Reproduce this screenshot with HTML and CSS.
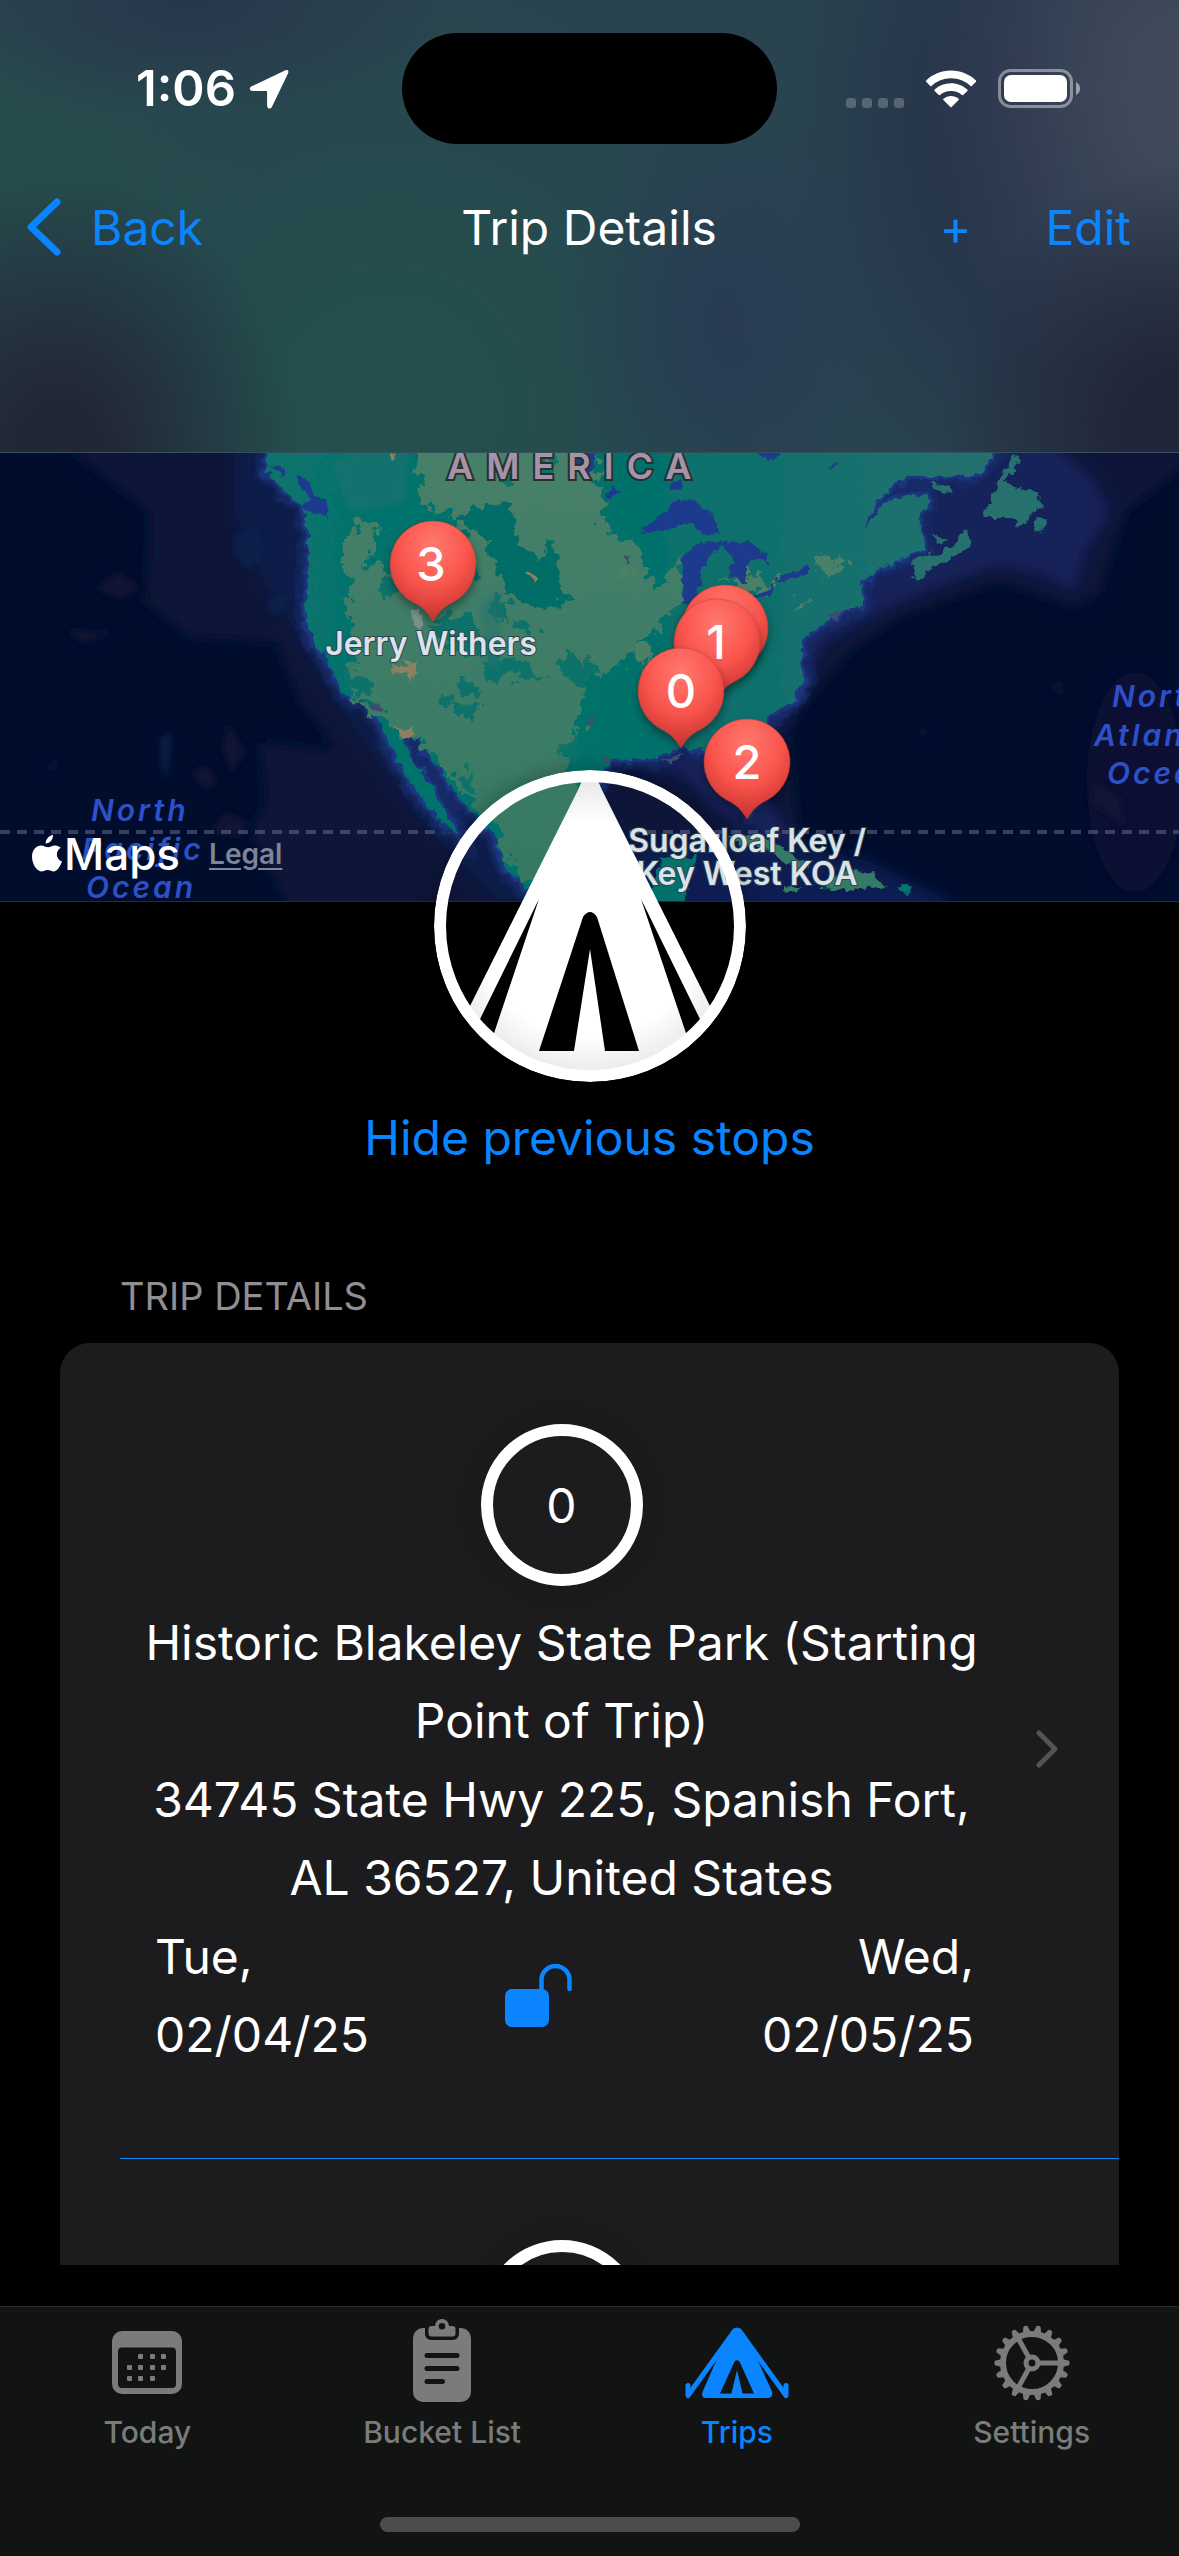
FILE: index.html
```html
<!DOCTYPE html>
<html lang="en">

<head>
  <meta charset="UTF-8">
  <meta name="viewport" content="width=device-width, initial-scale=1">
  <title>Trip Details</title>
  <link rel="stylesheet" href="styles.css">
</head>

<body>

  <header class="header">
    <div class="status-bar">
      <div class="status-left">
        <span class="time">1:06</span>
        <svg class="icon-location" viewBox="0 0 40 40" aria-hidden="true">
          <path d="M36.500 1.200 2.800 17.200C-.4 18.800.4 22 3.600 22H17.200a.9.900 0 0 1 .9.900V36.400c0 3.600 3.600 4.200 5 1.100L39 4.400C40.200 1.800 38.600.200 36.500 1.200Z" fill="#fff"/>
        </svg>
      </div>
      <div class="island"></div>
      <div class="status-right">
        <div class="signal"><i></i><i></i><i></i><i></i></div>
        <svg class="icon-wifi" viewBox="0 0 50 38" aria-hidden="true">
          <g fill="#fff">
            <path d="M25 .5C34.800.500 43.600 4.300 50 10.600a.9.900 0 0 1 0 1.200L45.800 16a.9.900 0 0 1-1.300 0A28 28 0 0 0 25 8.200 28 28 0 0 0 5.500 16a.9.900 0 0 1-1.300 0L.2 11.800a.9.900 0 0 1 0-1.200C6.400 4.300 15.200.500 25 .5Z"/>
            <path d="M25 13.200c6.300 0 12.100 2.400 16.400 6.400a.9.900 0 0 1 0 1.300l-4.200 4.200a.9.900 0 0 1-1.200 0A16 16 0 0 0 25 20.900a16 16 0 0 0-11 4.200.9.900 0 0 1-1.200 0l-4.200-4.200a.9.900 0 0 1 0-1.300A24 24 0 0 1 25 13.200Z"/>
            <path d="M25 26c2.900 0 5.600 1 7.600 2.800a.9.900 0 0 1 0 1.300l-7 7a.9.900 0 0 1-1.200 0l-7-7a.9.900 0 0 1 0-1.300A11.500 11.500 0 0 1 25 26Z"/>
          </g>
        </svg>
        <svg class="icon-battery" viewBox="0 0 83 39" aria-hidden="true">
          <rect x="1.500" y="1.500" width="72" height="36" rx="11" fill="none" stroke="#fff" stroke-opacity=".42" stroke-width="3"/>
          <rect x="6" y="6" width="63" height="27" rx="7" fill="#fff"/>
          <path d="M78 13v13q4-2 4-6.500T78 13Z" fill="#fff" fill-opacity=".5"/>
        </svg>
      </div>
    </div>

    <nav class="nav-bar">
      <button type="button" class="nav-btn back-btn">
        <svg class="icon-back" viewBox="0 0 34 58" aria-hidden="true">
          <path d="M30 4 4 29l26 25" fill="none" stroke="currentColor" stroke-width="7" stroke-linecap="round" stroke-linejoin="round"/>
        </svg>
        Back
      </button>
      <h1 class="title">Trip Details</h1>
      <div class="nav-actions">
        <button type="button" class="nav-btn" aria-label="Add stop">+</button>
        <button type="button" class="nav-btn">Edit</button>
      </div>
    </nav>
  </header>

  <main class="content">
    <section class="map">
      <svg class="map-canvas" viewBox="0 0 1179 450" preserveAspectRatio="xMidYMid slice" role="img" aria-label="Map of trip stops">
        <defs>
          <linearGradient id="land" x1="0" y1="0" x2="1" y2="0">
            <stop offset="0" stop-color="#08736d"/>
            <stop offset=".45" stop-color="#00726b"/>
            <stop offset=".7" stop-color="#126f6d"/>
            <stop offset="1" stop-color="#27706f"/>
          </linearGradient>
          <linearGradient id="plains" x1="0" y1="0" x2="0" y2="1">
            <stop offset="0" stop-color="#488068"/>
            <stop offset="1" stop-color="#347864"/>
          </linearGradient>
          <radialGradient id="pinFill" cx=".5" cy=".25" r=".8">
            <stop offset="0" stop-color="#ff7970"/>
            <stop offset=".5" stop-color="#fa554d"/>
            <stop offset="1" stop-color="#bd2c28"/>
          </radialGradient>
          <filter id="rough" x="-5%" y="-5%" width="110%" height="110%">
            <feTurbulence type="fractalNoise" baseFrequency=".09" numOctaves="3" seed="4" result="n"/>
            <feDisplacementMap in="SourceGraphic" in2="n" scale="12" xChannelSelector="R" yChannelSelector="G"/>
          </filter>
          <filter id="rougher" x="-5%" y="-5%" width="110%" height="110%">
            <feTurbulence type="fractalNoise" baseFrequency=".07" numOctaves="4" seed="9" result="n"/>
            <feDisplacementMap in="SourceGraphic" in2="n" scale="34" xChannelSelector="R" yChannelSelector="G"/>
          </filter>
          <filter id="soft"><feGaussianBlur stdDeviation="8"/></filter>
          <filter id="softer"><feGaussianBlur stdDeviation="3"/></filter>
          <filter id="pinShadow" x="-40%" y="-30%" width="180%" height="170%">
            <feDropShadow dx="0" dy="5" stdDeviation="5" flood-color="#000" flood-opacity=".4"/>
          </filter>
          <path id="mainland" d="M272-20 265 18 283 37 303 53 308 80 308 117 306 147 307 170 314 190 330 213 345 243 367 253 380 270 393 300 410 330 430 357 447 375 458 383 453 369 442 355 432 333 417 317 405 293 403 283 415 283 427 303 443 323 463 350 483 370 497 387 503 413 527 437 550 460 640 460 608 440 590 400 588 360 598 328 612 308 656 306 679 296 706 299 722 306 738 338 750 360 758 352 752 318 757 290 767 268 794 248 805 228 800 208 805 185 824 171 844 160 863 153 861 131 878 116 908 105 926 97 922 80 916 70 928 55 926 43 905 42 880 55 862 78 875 52 895 32 910 25 975 24 990 8 1012-20Z"/>
          <g id="pin">
            <path d="M0-43a43 43 0 0 1 21 80.500C10 43 6 47 0 57-6 47-10 43-21 37.500A43 43 0 0 1 0-43Z" fill="url(#pinFill)" stroke="#c43a34" stroke-opacity=".45"/>
          </g>
        </defs>

        <!-- ocean floor -->
        <rect width="1179" height="450" fill="#000d2d"/>
        <g filter="url(#soft)">
          <path d="M60-10 150 60 145 150 190 185 275 190 300 250 340 300 260 290 265 350 250 380 290 460 560 460 560 300 400 200 330-10Z" fill="#0e1638"/>
          <path d="M235-20 235 60 265 130 290 170 330 240 400 340 450 400 500 450 620 440 520 380 400 240 320 120 300-20Z" fill="#0f1d4a"/>
          <path d="M600 290 780 300 800 260 850 200 900 165 1000 130 1075 155 1100 140 1125 60 1190 10 1190-20 960-20 800 130 700 290 580 330 580 470 960 470 900 440 800 395 790 290Z" fill="#0e1638"/>
          <path d="M750 320 790 260 825 190 870 165 935 135 1000 112 1050 125 1072 140 1085 100 1110 60 1090 25 1050-10 960-10 840 120 760 260Z" fill="#14225a"/>
          <path d="M600 310 700 298 740 330 775 360 800 395 770 385 720 360 680 320 640 315Z" fill="#14225a"/>
          <ellipse cx="1135" cy="330" rx="48" ry="110" fill="#0d1436" opacity=".8"/>
          <path d="M640 400 740 380 870 410 950 450 950 460 640 460Z" fill="#12205a" opacity=".8"/>
        </g>
        <g fill="#121636" filter="url(#softer)" opacity=".8">
          <path d="M95 137 118 120 142 136 120 147ZM65 178 115 180 85 192ZM190 320 205 313 218 330 206 338ZM210 380 225 360 250 370 240 385ZM43 320 65 300 52 318ZM918 275 935 285 920 282ZM1052 235 1060 228 1062 245ZM1095 330 1120 345 1125 375 1090 350ZM228 270 245 300 232 322 222 296Z"/>
        </g>
        <g fill="#0b2450" filter="url(#softer)" opacity=".7">
          <path d="M232 85 255 72 265 100 250 120 235 105ZM270 145 290 140 280 165 267 160ZM160 285 172 280 168 330 160 310Z"/>
        </g>
        <path d="M0 380H1179" stroke="#8b93b4" stroke-opacity=".38" stroke-width="4" stroke-dasharray="10 7"/>

        <!-- land -->
        <g filter="url(#rough)">
          <use href="#mainland" fill="none" stroke="#172968" stroke-width="18" filter="url(#softer)"/>
          <use href="#mainland" fill="none" stroke="#1d3480" stroke-width="7"/>
          <use href="#mainland" fill="url(#land)"/>
          <g fill="#27716e">
            <path d="M1012 3 1019 10 1006 31 1036 40 1044 55 1030 64 1019 76 1015 66 983 66 989 48 998 31Z"/>
            <path d="M1036 66 1048 68 1042 80 1034 76ZM929 30 942 32 953 40 943 42ZM932 82 946 88 940 92Z"/>
            <path d="M910 112 915 128 935 115 962 102 973 90 967 77 955 94 935 100Z"/>
          </g>
          <path d="M660 406 694 404 690 425 682 460 645 460 655 430Z" fill="#00726b"/>
          <g fill="#357a66">
            <path d="M727 385 756 381 786 397 810 416 796 418 771 397 745 393ZM821 436 847 420 870 421 887 434 850 438ZM786 434 800 436 796 442 786 439Z"/>
          </g>
          <path d="M899 434 913 435 910 441 900 440Z" fill="#04746e"/>
        </g>

        <g filter="url(#rougher)">
          <path d="M412-10 590-10 600 30 606 77 637 97 652 134 688 112 690 143 640 193 612 217 587 230 578 267 574 293 560 307 577 327 585 360 580 460 535 435 508 408 500 380 470 350 440 315 420 285 400 292 385 262 352 248 344 218 358 205 350 165 350 122 340 112 348 92 358 60 376 75 375 95 362 112 400 118 445 140 478 120 452 90 462 62 430 62 420 36Z" fill="url(#plains)"/>
          <path d="M462 58 490 50 510 55 522 75 520 95 545 105 552 90 560 120 570 145 550 160 532 150 510 140 500 115 485 100 480 80 466 82Z" fill="#006e66"/>
          <g fill="#0a726a">
            <path d="M432 172 460 160 475 165 485 190 500 185 498 210 520 205 548 222 530 228 505 225 488 232 480 205 455 200 440 190Z"/>
            <path d="M440 240 450 248 480 255 475 266 450 262ZM462 230 480 235 478 242 462 240ZM495 140 510 150 500 172 492 160ZM515 165 535 175 530 190 512 180ZM560 200 575 200 572 230 560 222ZM463 315 475 320 480 345 462 335ZM530 10 550 5 555 20 540 24ZM500 22 515 28 512 38 498 34ZM557 300 580 290 585 310 570 312ZM380 120 400 128 392 150 378 140Z"/>
          </g>
          <path d="M340 215 350 210 368 230 370 245 355 243ZM558 222 590 205 600 225 580 232Z" fill="#0a726a"/>
          <path d="M628 195 650 195 655 215 640 212ZM622 110 632 112 632 125 622 122ZM812 110 840 102 846 112 825 125ZM725 128 748 118 775 132 765 142 748 142ZM790 150 805 152 802 158Z" fill="#4c8068"/>
        </g>
        <g filter="url(#softer)" fill="#25726e" opacity=".5">
          <path d="M330 10 350 0 410 0 405 50 350 60Z"/>
          <path d="M480 150 500 140 500 220 485 215Z"/>
        </g>
        <g filter="url(#rough)">
          <path d="M405 205 420 218 408 230ZM392 215 418 210 410 220 395 222ZM396 278 410 274 417 285 400 283ZM527 122 538 124 532 130ZM388 0 397 2 394 8Z" fill="#8a8262"/>
          <path d="M412 158 422 158 422 176 413 174Z" fill="#7d8f88"/>
          <path d="M585 272 594 264 592 274ZM624 104 632 106 628 112ZM367 253 382 254 378 258ZM660 310 680 302 678 308ZM605 304 612 308 604 312ZM828 164 845 158 835 168Z" fill="#3d4d72"/>
        </g>

        <!-- lakes and sounds -->
        <g fill="#1f3a8c" filter="url(#rough)">
          <path d="M639 81 660 63 681 45 700 52 716 68 720 84 702 83 692 70 681 69 672 77Z"/>
          <path d="M684 103 698 92 721 88 714 99 701 115 701 131 695 152 683 152Z"/>
          <path d="M718 89 752 91 768 103 768 112 754 105 748 115 748 132 737 126 727 126 735 111 727 98Z"/>
          <path d="M748 146 771 135 777 131 771 142 755 148ZM771 126 790 121 806 115 806 123 788 129Z"/>
          <path d="M576 0 594-4 596 16 586 26 576 14ZM604 44 614 32 620 40 612 46ZM672 30 682 28 682 38 674 38ZM760 0 780-2 776 8 764 8ZM828 18 840 6 834 16Z"/>
          <path d="M296 22 308 30 318 42 326 52 328 70 322 62 312 60 300 52 312 50 300 36ZM268 14 286 18 282 22Z"/>
        </g>

        <!-- place names -->
        <g class="region-label">
          <text x="447" y="27">AMERICA</text>
        </g>
        <g class="ocean-label">
          <text x="91" y="369">North</text>
          <text x="82" y="408">Pacific</text>
          <text x="86" y="446">Ocean</text>
          <text x="1112" y="255">North</text>
          <text x="1094" y="294">Atlantic</text>
          <text x="1107" y="332">Ocean</text>
        </g>
        <g class="pin-label">
          <text x="431" y="203">Jerry Withers</text>
          <text x="747" y="400">Sugarloaf Key /</text>
          <text x="747" y="433">Key West KOA</text>
        </g>

        <!-- stops -->
        <g class="pin-number">
          <g filter="url(#pinShadow)"><use href="#pin" x="433" y="112"/></g>
          <text x="431" y="129">3</text>
          <g filter="url(#pinShadow)"><use href="#pin" x="725" y="176"/></g>
          <g filter="url(#pinShadow)"><use href="#pin" x="717" y="190"/></g>
          <text x="716" y="207">1</text>
          <g filter="url(#pinShadow)"><use href="#pin" x="681" y="239"/></g>
          <text x="681" y="256">0</text>
          <g filter="url(#pinShadow)"><use href="#pin" x="747" y="310"/></g>
          <text x="747" y="327">2</text>
        </g>
      </svg>
      <div class="map-credit">
        <svg class="icon-apple" viewBox="0 0 30 38" aria-hidden="true">
          <path d="M21 0c.3 4.500-3.400 8.600-7.300 8.500C13.400 4.500 17.100.500 21 0ZM28.800 12.800c-6 3.700-4.700 11.400 1.200 13.800-1.400 4-4.500 9.700-8 9.900-2.300.1-3.400-1.400-6.300-1.400s-4 1.400-6.200 1.400C4.600 36.500 0 28.600 0 21.800c0-7.200 4.500-11.400 9-11.400 2.900 0 4.800 1.800 7.100 1.800 2.200 0 3.900-2 7.200-1.800 2.100.1 4.200.9 5.500 2.400Z" fill="#fff"/>
        </svg>
        <span class="maps-name">Maps</span>
        <a href="#" class="legal">Legal</a>
      </div>
    </section>

    <section class="trip-head">
      <svg class="trip-logo" viewBox="0 0 312 312" role="img" aria-label="Trip">
        <defs>
          <radialGradient id="tentShade">
            <stop offset=".7" stop-color="#fff"/>
            <stop offset="1" stop-color="#e6e6e6"/>
          </radialGradient>
          <clipPath id="logoClip"><circle cx="156" cy="156" r="146"/></clipPath>
        </defs>
        <path clip-path="url(#logoClip)" fill="url(#tentShade)" fill-rule="evenodd" d="M144 20Q149 6 156 6T168 20L314 312H-2ZM105 129 20 302 47 302ZM207 129 265 302 292 302ZM105 281 149 147Q156 137 163 147L205 281H171L156 179 140 281Z"/>
        <circle cx="156" cy="156" r="150" fill="none" stroke="#fff" stroke-width="12"/>
      </svg>
      <button type="button" class="hide-btn">Hide previous stops</button>
    </section>

    <section class="stops">
      <h2 class="section-title">TRIP DETAILS</h2>
      <ul class="stop-list">
        <li class="stop">
          <a href="#" class="stop-link">
            <div class="stop-body">
              <div class="badge">0</div>
              <p class="stop-name">Historic Blakeley State Park (Starting Point of Trip)</p>
              <p class="stop-address">34745 State Hwy 225, Spanish Fort, AL 36527, United States</p>
              <div class="dates">
                <time class="date" datetime="2025-02-04">Tue,<br>02/04/25</time>
                <svg class="icon-lock" viewBox="0 0 68 64" aria-hidden="true">
                  <rect x="0" y="25" width="44" height="38" rx="7" fill="currentColor"/>
                  <path d="M36.500 27V16a14 14 0 0 1 28 0v9" fill="none" stroke="currentColor" stroke-width="4.500" stroke-linecap="round"/>
                </svg>
                <time class="date date-end" datetime="2025-02-05">Wed,<br>02/05/25</time>
              </div>
            </div>
            <svg class="icon-chevron" viewBox="0 0 24 38" aria-hidden="true">
              <path d="M4 3 20 19 4 35" fill="none" stroke="#545456" stroke-width="5" stroke-linecap="round" stroke-linejoin="round"/>
            </svg>
          </a>
        </li>
        <li class="stop">
          <a href="#" class="stop-link" aria-label="Next stop">
            <div class="stop-body">
              <div class="badge"></div>
            </div>
          </a>
        </li>
      </ul>
    </section>
  </main>

  <footer class="tab-bar">
    <nav class="tabs">
      <a href="#" class="tab">
        <svg class="tab-icon" viewBox="0 0 110 90" aria-hidden="true">
          <path fill="currentColor" fill-rule="evenodd" d="M30 14H80a10 10 0 0 1 10 10V67a10 10 0 0 1-10 10H30a10 10 0 0 1-10-10V24a10 10 0 0 1 10-10ZM30 30.500a4 4 0 0 0-4 4V67a4 4 0 0 0 4 4H80a4 4 0 0 0 4-4V34.500a4 4 0 0 0-4-4Z"/>
          <g fill="currentColor">
            <rect x="46" y="37" width="5" height="5" rx="1"/><rect x="58" y="37" width="5" height="5" rx="1"/><rect x="69" y="37" width="5" height="5" rx="1"/>
            <rect x="35" y="48" width="5" height="5" rx="1"/><rect x="46" y="48" width="5" height="5" rx="1"/><rect x="58" y="48" width="5" height="5" rx="1"/><rect x="69" y="48" width="5" height="5" rx="1"/>
            <rect x="35" y="59" width="5" height="5" rx="1"/><rect x="46" y="59" width="5" height="5" rx="1"/><rect x="58" y="59" width="5" height="5" rx="1"/>
          </g>
        </svg>
        Today
      </a>
      <a href="#" class="tab">
        <svg class="tab-icon" viewBox="0 0 110 90" aria-hidden="true">
          <path fill="currentColor" d="M36 11H38V17a6 6 0 0 0 6 6H66a6 6 0 0 0 6-6V11H74a10 10 0 0 1 10 10V75a10 10 0 0 1-10 10H36a10 10 0 0 1-10-10V21a10 10 0 0 1 10-10Z"/>
          <path fill="currentColor" fill-rule="evenodd" d="M44.500 9H48a7 7 0 0 1 14 0H65.500a3 3 0 0 1 3 3V16.500a3 3 0 0 1-3 3H44.500a3 3 0 0 1-3-3V12a3 3 0 0 1 3-3ZM55 6a3.300 3.300 0 1 0 0 6.600A3.300 3.300 0 0 0 55 6Z"/>
          <path d="M40 38.500H70M40 51.500H70M40 64.500H55.500" stroke="#121413" stroke-width="5" stroke-linecap="round"/>
        </svg>
        Bucket List
      </a>
      <a href="#" class="tab active" aria-current="page">
        <svg class="tab-icon" viewBox="0 0 110 90" aria-hidden="true">
          <path fill="currentColor" fill-rule="evenodd" d="M51 13Q55 8 59 13L74 39.500 90 74.500Q91 81 86 81H24Q19 81 20.500 75L36 39.500ZM38 76.500 52.500 44.500Q55 42 57.500 44.500L72 76.500H60.500L55 53 49.500 76.500Z"/>
          <path d="M52.500 14 6 78.500V68.500M57.500 14 104 78.500V68.500" fill="none" stroke="currentColor" stroke-width="5" stroke-linecap="round" stroke-linejoin="round"/>
        </svg>
        Trips
      </a>
      <a href="#" class="tab">
        <svg class="tab-icon" viewBox="0 0 110 90" aria-hidden="true">
          <defs>
            <path id="tooth" d="M83.500 41.500 92 43.800Q93.500 46 92 48.200L83.500 50.500Z"/>
            <g id="teeth3"><use href="#tooth"/><use href="#tooth" transform="rotate(20 55 46)"/><use href="#tooth" transform="rotate(40 55 46)"/></g>
            <g id="teeth9"><use href="#teeth3"/><use href="#teeth3" transform="rotate(60 55 46)"/><use href="#teeth3" transform="rotate(120 55 46)"/></g>
          </defs>
          <g fill="currentColor"><use href="#teeth9"/><use href="#teeth9" transform="rotate(180 55 46)"/></g>
          <g fill="none" stroke="currentColor" stroke-width="5">
            <circle cx="55" cy="46" r="29" stroke-width="6"/>
            <circle cx="55" cy="46" r="6"/>
            <path d="M62 46H83M51.500 40 41 21M51.500 52 41 71"/>
          </g>
        </svg>
        Settings
      </a>
    </nav>
    <div class="home-indicator"></div>
  </footer>

</body>

</html>
```
FILE: styles.css
```css
* {
  box-sizing: border-box;
}

body {
  margin: 0;
  height: 100vh;
  display: flex;
  flex-direction: column;
  overflow: hidden;
  background: #000;
  color: #fff;
  font-family: Inter, "Noto Sans", sans-serif;
  font-size: 48px;
}

button {
  padding: 0;
  border: none;
  background: none;
  color: #0a84ff;
  font: inherit;
  cursor: pointer;
}

a {
  color: inherit;
  text-decoration: none;
}

/* header */
.header {
  flex: none;
  height: 453px;
  border-bottom: 1px solid #35505c;
  background:
    radial-gradient(ellipse 240px 280px at 5% 100%, #222738 20%, transparent),
    radial-gradient(ellipse 240px 260px at 100% 95%, #22263a 25%, transparent),
    radial-gradient(ellipse 260px 330px at 100% 20%, #414a5c 10%, transparent),
    radial-gradient(ellipse 170px 230px at 62% 72%, #283b54, transparent),
    radial-gradient(ellipse 220px 400px at 85% 30%, #26334a 20%, transparent),
    radial-gradient(ellipse 260px 120px at 16% 0, #28384c 10%, transparent),
    radial-gradient(ellipse 420px 420px at 33% 90%, #234f4c 20%, transparent),
    radial-gradient(ellipse 260px 200px at 0 38%, #264c4b 20%, transparent),
    #29444f;
}

.status-bar {
  display: grid;
  grid-template-columns: 1fr auto 1fr;
  align-items: center;
  padding: 33px 98px 0 136px;
}

.status-left {
  display: flex;
  align-items: center;
  gap: 13px;
}

.time {
  font-size: 49px;
  font-weight: 600;
}

.icon-location {
  width: 40px;
  height: 40px;
}

.island {
  width: 375px;
  height: 111px;
  margin-right: 38px;
  border-radius: 56px;
  background: #000;
}

.status-right {
  display: flex;
  justify-content: flex-end;
  align-items: flex-end;
  gap: 22px;
}

.signal {
  display: flex;
  gap: 6px;
}

.signal i {
  width: 10px;
  height: 10px;
  border-radius: 3px;
  background: rgba(255, 255, 255, 0.22);
}

.icon-wifi {
  width: 50px;
  height: 38px;
}

.icon-battery {
  width: 83px;
  height: 39px;
}

.nav-bar {
  display: grid;
  grid-template-columns: 1fr auto 1fr;
  align-items: center;
  height: 166px;
  padding: 0 48px 0 27px;
}

.back-btn {
  display: flex;
  align-items: center;
  gap: 30px;
  justify-self: start;
}

.icon-back {
  width: 34px;
  height: 58px;
}

.title {
  margin: 0 0 0 20px;
  font-size: 48px;
  font-weight: 400;
}

.nav-actions {
  display: flex;
  justify-content: flex-end;
  gap: 74px;
}

/* map */
.content {
  flex: 1;
  min-height: 0;
  margin-bottom: 41px;
  overflow: hidden;
}

.map {
  position: relative;
  height: 449px;
  border-bottom: 1px solid #2a2a2c;
}

.map-canvas {
  display: block;
  width: 100%;
  height: 100%;
}

.region-label text {
  font-size: 36px;
  font-weight: 600;
  letter-spacing: 13px;
  fill: #a793a8;
  stroke: #26302f;
  stroke-width: 4px;
  paint-order: stroke;
}

.ocean-label text {
  font-size: 30px;
  font-weight: 600;
  font-style: italic;
  letter-spacing: 3px;
  fill: #2d50c8;
}

.pin-label text {
  font-size: 32px;
  font-weight: 600;
  text-anchor: middle;
  fill: #dbe2ea;
  stroke: #2c4650;
  stroke-width: 2px;
  paint-order: stroke;
}

.pin-number text {
  font-size: 47px;
  font-weight: 500;
  text-anchor: middle;
  fill: #fff;
}

.map-credit {
  position: absolute;
  left: 32px;
  bottom: 17px;
  display: flex;
  align-items: center;
  line-height: 60px;
}

.icon-apple {
  width: 30px;
  height: 38px;
  margin-right: 2px;
}

.maps-name {
  margin-right: 29px;
  font-size: 44px;
  font-weight: 500;
}

.legal {
  color: #7e8499;
  font-size: 28px;
  font-weight: 600;
  text-decoration: underline;
  text-underline-offset: 4px;
}

/* trip logo and toggle */
.trip-head {
  position: relative;
  display: flex;
  flex-direction: column;
  align-items: center;
  margin-top: -132px;
}

.trip-logo {
  width: 312px;
  height: 312px;
  border-radius: 50%;
  box-shadow: 0 0 20px rgba(0, 0, 0, 0.3);
}

.hide-btn {
  margin-top: 16px;
  line-height: 80px;
}

/* stops */
.stops {
  padding: 80px 60px 0;
}

.section-title {
  margin: 0;
  padding: 14px 60px 23px;
  color: #8e8e93;
  font-size: 38px;
  font-weight: 400;
  line-height: 48px;
}

.stop-list {
  margin: 0;
  padding: 0;
  list-style: none;
  border-radius: 30px;
  background: #1c1c1e;
}

.stop + .stop {
  margin-left: 60px;
  border-top: 1px solid #0a84ff;
}

.stop + .stop .stop-link {
  padding-left: 0;
}

.stop-link {
  display: flex;
  align-items: center;
  gap: 32px;
  padding: 81px 60px 84px;
}

.stop-body {
  flex: 1;
  display: flex;
  flex-direction: column;
  align-items: center;
  text-align: center;
  line-height: 78px;
}

/* keeps the body clear of the chevron column */
.stop + .stop .stop-body {
  padding-right: 56px;
}

.badge {
  width: 162px;
  height: 162px;
  margin-bottom: 18px;
  border: 12px solid #fff;
  border-radius: 50%;
  line-height: 140px;
  box-shadow: 0 0 30px rgba(0, 0, 0, 0.15);
}

.stop-name,
.stop-address {
  margin: 0 0 1px;
}

.dates {
  align-self: stretch;
  display: flex;
  justify-content: space-between;
  align-items: center;
  padding: 0 29px 0 35px;
}

.date {
  text-align: left;
}

.date-end {
  text-align: right;
}

.icon-lock {
  width: 68px;
  height: 64px;
  margin-right: 52px;
  color: #0a84ff;
}

.icon-chevron {
  width: 24px;
  height: 38px;
}

/* tab bar */
.tab-bar {
  flex: none;
  height: 250px;
  display: flex;
  flex-direction: column;
  justify-content: space-between;
  align-items: center;
  padding-bottom: 24px;
  border-top: 1px solid #2a2a2a;
  background: #121413;
}

.tabs {
  align-self: stretch;
  display: grid;
  grid-template-columns: repeat(4, 1fr);
  padding-top: 10px;
}

.tab {
  display: flex;
  flex-direction: column;
  align-items: center;
  gap: 6px;
  color: #7a7c7a;
  font-size: 30px;
  font-weight: 500;
  line-height: 38px;
}

.tab.active {
  color: #0a84ff;
}

.tab-icon {
  width: 110px;
  height: 90px;
}

.home-indicator {
  width: 420px;
  height: 15px;
  border-radius: 8px;
  background: #4c4c4c;
}
```
